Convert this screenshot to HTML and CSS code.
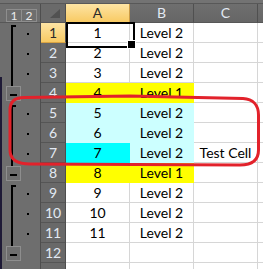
FILE: index.html
```html
<!DOCTYPE html>
<html lang="en">
<head>
    <link rel="stylesheet" href="styles.css">
</head>
<body>
<div class="app">
    <div class="topbar"></div>
    <div class="main">
        <!-- outline gutter -->
        <div class="gutter">
            <div class="levels"><span class="lvl">1</span><span class="lvl">2</span></div>
            <div class="outline">
                <div class="level1">
                    <div class="group"><div class="bracket"></div><div class="toggle"></div></div>
                    <div class="group"><div class="bracket"></div><div class="toggle"></div></div>
                    <div class="group"><div class="bracket"></div><div class="toggle"></div></div>
                </div>
                <div class="level2">
                    <div class="orow"><i class="dot"></i></div>
                    <div class="orow"><i class="dot"></i></div>
                    <div class="orow"><i class="dot"></i></div>
                    <div class="orow"></div>
                    <div class="orow"><i class="dot"></i></div>
                    <div class="orow"><i class="dot"></i></div>
                    <div class="orow"><i class="dot"></i></div>
                    <div class="orow"></div>
                    <div class="orow"><i class="dot"></i></div>
                    <div class="orow"><i class="dot"></i></div>
                    <div class="orow"><i class="dot"></i></div>
                    <div class="orow"></div>
                </div>
            </div>
        </div>

        <div class="sheet">
            <div class="corner"></div>
            <div class="colhead active">A</div>
            <div class="colhead">B</div>
            <div class="colhead">C</div>
            <div class="colhead"></div>

            <div class="rowhead active">1</div>
            <div class="cell sel">1</div><div class="cell">Level 2</div><div class="cell"></div><div class="cell"></div>
            <div class="rowhead">2</div>
            <div class="cell">2</div><div class="cell">Level 2</div><div class="cell"></div><div class="cell"></div>
            <div class="rowhead">3</div>
            <div class="cell">3</div><div class="cell">Level 2</div><div class="cell"></div><div class="cell"></div>
            <div class="rowhead">4</div>
            <div class="cell yellow">4</div><div class="cell yellow">Level 1</div><div class="cell"></div><div class="cell"></div>
            <div class="rowhead">5</div>
            <div class="cell pale">5</div><div class="cell pale">Level 2</div><div class="cell"></div><div class="cell"></div>
            <div class="rowhead">6</div>
            <div class="cell pale">6</div><div class="cell pale">Level 2</div><div class="cell"></div><div class="cell"></div>
            <div class="rowhead">7</div>
            <div class="cell cyan">7</div><div class="cell pale">Level 2</div><div class="cell">Test Cell</div><div class="cell"></div>
            <div class="rowhead">8</div>
            <div class="cell yellow">8</div><div class="cell yellow">Level 1</div><div class="cell"></div><div class="cell"></div>
            <div class="rowhead">9</div>
            <div class="cell">9</div><div class="cell">Level 2</div><div class="cell"></div><div class="cell"></div>
            <div class="rowhead">10</div>
            <div class="cell">10</div><div class="cell">Level 2</div><div class="cell"></div><div class="cell"></div>
            <div class="rowhead">11</div>
            <div class="cell">11</div><div class="cell">Level 2</div><div class="cell"></div><div class="cell"></div>
            <div class="rowhead">12</div>
            <div class="cell"></div><div class="cell"></div><div class="cell"></div><div class="cell"></div>
            <div class="rowhead"></div>
            <div class="cell"></div><div class="cell"></div><div class="cell"></div><div class="cell"></div>
        </div>
    </div>

    <!-- red hand drawn mark around rows 5-7 -->
    <svg class="mark" width="263" height="269" viewBox="0 0 263 269">
        <path d="M24 97.5 L130 96 L243 98.5 C253 99 258.5 105 258.5 115 L258.5 150 C258.5 160 252 165 240 165 L30 164 C17 164 10 160 10 150 L10 110 C10 101 15 97.5 24 97.5 Z"
              fill="none" stroke="#e2222b" stroke-width="3"/>
    </svg>
</div>
</body>
</html>
```

FILE: styles.css
```css
* {
    box-sizing: border-box;
}

body {
    margin: 0;
    width: 263px;
    height: 269px;
    overflow: hidden;
    background: #6b6b6b;
    font-family: Lato, "Liberation Sans", sans-serif;
}

.app {
    position: relative;
    height: 269px;
    overflow: hidden;
}

.topbar {
    height: 4px;
    background: #737373;
    border-bottom: 1px solid #585858;
}

.main {
    display: flex;
}

/* outline gutter */
.gutter {
    width: 41px;
    flex: none;
    background: #6e6e6e;
    border-right: 1px solid #4e4e4e;
}

.levels {
    height: 19px;
    display: flex;
    padding: 5px 0 0 6px;
    border-bottom: 1px solid #575757;
}

.lvl {
    width: 16px;
    height: 13px;
    border: 1px solid #8e8e8e;
    color: #ececec;
    font-size: 12px;
    line-height: 11px;
    text-align: center;
}

.lvl + .lvl {
    margin-left: -1px;
}

.outline {
    display: flex;
    height: 246px;
    background: linear-gradient(#1e1a36, #1e1a36) no-repeat 0 54px / 2px 100%;
}

.level1 {
    width: 22px;
}

.group {
    height: 80px;
    display: flex;
    flex-direction: column;
}

.bracket {
    margin: 2px 0 0 11px;
    width: 5px;
    height: 61px;
    border-left: 2px solid #000;
    border-top: 2px solid #000;
}

.toggle {
    margin-left: 6px;
    width: 15px;
    height: 15px;
    border: 1px solid #8e8e8e;
    padding: 7px 0 0 3px;
}

.toggle::before {
    content: "";
    display: block;
    width: 7px;
    height: 2px;
    background: #000;
}

.level2 {
    width: 18px;
}

.orow {
    height: 20px;
    padding: 10px 0 0 5px;
}

.dot {
    display: block;
    width: 2px;
    height: 2px;
    background: #000;
}

/* sheet */
.sheet {
    display: grid;
    grid-template-columns: 25px 64px 64px 64px 64px;
    grid-template-rows: 19px;
    grid-auto-rows: 20px;
    background: #fff;
}

.corner {
    position: relative;
    background: #6a6a6a;
    border-right: 1px solid #4e4e4e;
    border-bottom: 1px solid #575757;
}

.corner::after {
    content: "";
    position: absolute;
    right: 5px;
    bottom: 4px;
    width: 10px;
    height: 9px;
    background: #515151;
    clip-path: polygon(100% 0, 100% 100%, 0 100%);
}

.colhead {
    background: linear-gradient(#6f6f6f, #666);
    border-right: 1px solid #505050;
    border-bottom: 1px solid #575757;
    color: #e3e9f3;
    font-size: 14px;
    line-height: 18px;
    text-align: center;
}

.colhead.active {
    background: linear-gradient(#fde4a4, #f8ca63);
    border-right-color: #c99a45;
    border-bottom-color: #d9a443;
    color: #2a2a2a;
}

.rowhead {
    background: #696969;
    border-right: 1px solid #4e4e4e;
    border-bottom: 1px solid #555;
    color: #e3e9f3;
    font-size: 14px;
    line-height: 19px;
    text-align: center;
}

.rowhead.active {
    background: linear-gradient(#fde4a4, #f8ca63);
    border-bottom-color: #d9a443;
    color: #2a2a2a;
}

.cell {
    border-right: 1px solid #d6d6d6;
    border-bottom: 1px solid #d6d6d6;
    color: #000;
    font-size: 14px;
    line-height: 20px;
    text-align: center;
    white-space: nowrap;
}

.yellow {
    background: #ffff00;
    border-color: #ffff00;
}

.pale {
    background: #ccffff;
    border-color: #ccffff;
}

.cyan {
    background: #00ffff;
    border-color: #00ffff;
}

/* active cell frame and fill handle */
.sel {
    position: relative;
}

.sel::after {
    content: "";
    position: absolute;
    left: 0;
    top: -1px;
    width: 65px;
    height: 22px;
    border: 2px solid #000;
}

.sel::before {
    content: "";
    position: absolute;
    left: 61px;
    top: 17px;
    width: 7px;
    height: 7px;
    background: #000;
    border: 1px solid #fff;
    z-index: 1;
}

.mark {
    position: absolute;
    left: 0;
    top: 0;
    pointer-events: none;
}
```
